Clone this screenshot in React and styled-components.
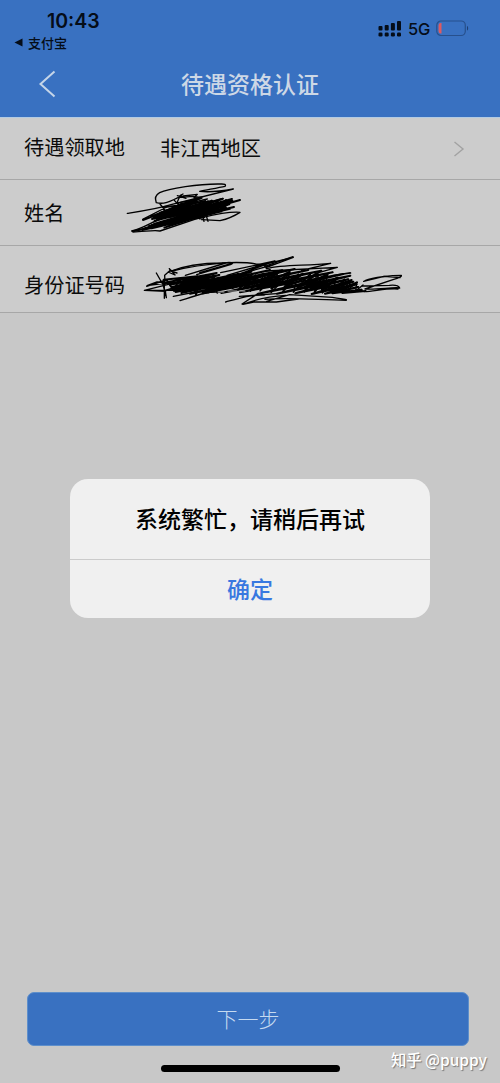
import styled, { createGlobalStyle } from "styled-components"

const GlobalStyle = createGlobalStyle`
    * {
        box-sizing: border-box;
    }
    body {
        margin: 0;
        background-color: #c8c8c8;
        font-family: "Noto Sans CJK SC", sans-serif;
    }
`

const Page = styled.div`
    width: 500px;
    height: 1083px;
    position: relative;
    display: flex;
    flex-direction: column;
    overflow: hidden;
    background-color: #c8c8c8;
    color: #0b0b0b;
`

const Header = styled.header`
    height: 118px;
    flex-shrink: 0;
    background-color: #3971c1;
    border-bottom: 1px solid #b3cbe3;
`
const StatusBar = styled.div`
    height: 52px;
    display: flex;
    justify-content: space-between;
`
const StatusLeft = styled.div`
    display: flex;
    flex-direction: column;
    padding: 9px 0 0 14px;
`
const Time = styled.div`
    margin-left: 33px;
    font: 600 19.5px/24px Inter, sans-serif;
    color: #050d18;
`
const BackToApp = styled.div`
    display: flex;
    align-items: center;
    gap: 5px;
    font-size: 13px;
    line-height: 19px;
    font-weight: 500;
    color: #050d18;
`
const StatusRight = styled.div`
    display: flex;
    height: 20px;
    margin: 18px 31px 0 0;
    align-items: center;
`
const Network = styled.span`
    width: 22px;
    margin: 2px 6px 0;
    font: 500 16.5px/20px Inter, sans-serif;
    letter-spacing: -0.3px;
    color: #050d18;
`

const NavBar = styled.div`
    height: 62px;
    display: grid;
    grid-template-columns: 70px 1fr 70px;
    align-items: center;
`
const BackButton = styled.div`
    display: flex;
    padding: 1px 0 0 38px;
`
const Title = styled.h1`
    margin: 0;
    text-align: center;
    font-size: 23px;
    line-height: 34px;
    font-weight: 500;
    color: #cdd8e6;
`

const Form = styled.div`
    background-color: #cccccc;
`
const Row = styled.div`
    height: ${props => props.$height}px;
    display: flex;
    align-items: center;
    padding-left: 24px;
    border-bottom: 1px solid #a7a7a7;
    font-size: 20.2px;
    line-height: 30px;
`
const Label = styled.div`
    width: 101px;
    flex-shrink: 0;
    white-space: nowrap;
    padding-top: ${props => props.$top || 0}px;
    padding-bottom: ${props => props.$bottom || 0}px;
`
const Value = styled.div`
    flex: 1;
    padding: 0 0 1px 35px;
`
const Arrow = styled.div`
    display: flex;
    margin-right: 34px;
`
const Scribble = styled.svg`
    display: block;
    flex-shrink: 0;
    fill: none;
    stroke: #000;
    stroke-linecap: round;
    stroke-linejoin: round;
`

const Bottom = styled.div`
    margin-top: auto;
    padding: 0 31px 11px 27px;
    display: flex;
    flex-direction: column;
`
const NextButton = styled.div`
    height: 54px;
    display: flex;
    align-items: center;
    justify-content: center;
    padding-bottom: 2px;
    border-radius: 7px;
    border: 1px solid #5e8fcb;
    background-color: #3971c1;
    color: #c6daf0;
    font-size: 21px;
    font-weight: 300;
`
const HomeIndicator = styled.div`
    width: 179px;
    height: 7px;
    margin: 19px 0 0 134px;
    border-radius: 4px;
    background-color: #000;
`

const Alert = styled.div`
    position: absolute;
    left: 70px;
    top: 479px;
    width: 360px;
    height: 139px;
    border-radius: 18px;
    background-color: #f0f0f0;
    text-align: center;
`
const Message = styled.div`
    height: 81px;
    border-bottom: 1px solid #cbcbcb;
    font-size: 23px;
    line-height: 78px;
    font-weight: 500;
    color: #000;
`
const Confirm = styled.div`
    font-size: 23px;
    line-height: 57px;
    font-weight: 500;
    color: #3878e0;
`

const Watermark = styled.div`
    position: absolute;
    right: 13px;
    bottom: 12px;
    font-size: 15.4px;
    line-height: 24px;
    font-weight: 500;
    color: #fff;
    white-space: nowrap;
    text-shadow: 1px 1px 1px #777;
`

const Signal = () => (
    <svg width="24" height="17" viewBox="0 0 24 17" fill="#050d18">
        <rect x="0.5" y="6" width="4" height="4.5" rx="1" />
        <rect x="6.7" y="5" width="4" height="5.5" rx="1" />
        <rect x="12.9" y="3" width="4" height="7.5" rx="1" />
        <rect x="19" y="1" width="4" height="9.5" rx="1" />
        <rect x="0.5" y="12.5" width="4" height="4" rx="1.3" />
        <rect x="6.7" y="12.5" width="4" height="4" rx="1.3" />
        <rect x="12.9" y="12.5" width="4" height="4" rx="1.3" />
        <rect x="19" y="12.5" width="4" height="4" rx="1.3" />
    </svg>
)

const Battery = () => (
    <svg width="33" height="17" viewBox="0 0 33 17">
        <rect x="0.8" y="1" width="28.5" height="14.5" rx="4.2" fill="none" stroke="#27508d" strokeWidth="1.2" />
        <path d="M31 6v4.5c1.5-.6 1.5-3.9 0-4.5z" fill="#1d3f73" />
        <path d="M5.5 3v10.5H4.8a2.2 2.2 0 0 1-2.200-2.200V5.200A2.200 2.200 0 0 1 4.800 3z" fill="#df5a60" />
    </svg>
)

const NameScribble = () => (
    <Scribble width="130" height="65" viewBox="125 180 130 65" overflow="visible">
        <g transform="translate(120 175) scale(.33333)" strokeWidth="4">
            <path d="M22 115C62 109 111 102 153 89L340 42C307 48 276 53 239 49C264 44 296 38 315 34Q321 26 301 27C238 26 145 40 119 53C100 64 107 78 109 83C137 91 158 74 174 68L218 64L248 68L204 80" />
            <path d="M172 62L198 70L181 61L189 57M180 62L172 81L183 98L163 76M190 63L232 58L222 68L244 70M182 82L240 72M176 92L262 72" />
            <path d="M68 133L140 96M95 123L183 88M120 87L137 108M245 134L300 137C321 132 343 123 360 112C321 108 272 122 224 133L120 168C98 164 72 171 39 171L35 168C72 159 97 140 122 132" />
            <path d="M250 130l2 9M260 126l4 13M223 116l17 16" />
        </g>
        <g transform="translate(120 175) scale(.33333)" strokeWidth="6">
            <path d="M69 135L204 83L101 129L264 79L96 132L305 72L111 132L336 72L104 137L337 77L102 147L328 88L95 150L360 75L86 154L342 96L74 160L330 101L57 165L306 109L42 168L282 115L67 165L262 120L95 160L248 122L133 158L223 130" />
            <path d="M131 96L190 91L121 113L223 84L130 116L276 77L142 120L309 71L149 126L333 79L155 133L320 90L165 139L318 98L184 137L287 111L196 133L252 127" />
            <path d="M128 111L160 99L147 125L181 96L171 125L206 94L192 127L228 90L207 132L253 86L230 128L273 84L255 121L295 76L276 112L318 75L297 108L330 82M180 88L230 76L200 90L256 78" />
        </g>
    </Scribble>
)

const IdScribble = () => (
    <Scribble width="290" height="66" viewBox="125 246 290 66" overflow="visible">
        <g transform="translate(135 245) scale(.33333)" strokeWidth="4">
            <path d="M64 84L84 119L94 158L91 139L28 136L136 109L36 122L66 111L103 112M90 119L89 91L106 76L103 71L111 79L120 90L99 81C145 63 207 54 261 54Q325 50 363 57L391 61M110 79L126 84M28 136H134M35 124L93 105M88 107V160" />
            <path d="M111 78C153 67 198 59 282 52Q301 52 286 59L185 89M151 91L272 54M194 83L290 55M257 83L420 48L306 90L422 57M276 91L380 60L475 37L393 68" />
            <path d="M135 167C179 153 219 137 260 142M115 154L196 138M272 171C314 159 344 149 388 150M321 177L370 145M324 178C379 157 416 153 452 151M324 178L356 171L424 171L490 162M313 154L425 146M395 169L464 149L592 157Q620 161 634 164M390 163C462 157 537 164 634 166" />
            <path d="M389 64L474 35M394 71C444 58 508 63 587 55L500 76M394 78L607 67L540 86M647 84L592 92L646 83M690 107C716 97 770 91 799 91Q802 96 774 104L690 132C725 135 779 125 794 129Q789 118 763 121L682 123M686 109L747 94L795 98M688 140C721 138 759 129 789 132" />
        </g>
        <g transform="translate(135 245) scale(.33333)" strokeWidth="6">
            <path d="M86 104L188 94L97 112L245 84L105 119L253 90L112 126L310 87L111 132L349 80L118 136L405 75L122 141L442 76L139 144L479 72L165 146L520 75L203 145L559 77L259 144L593 82L315 142L625 87L370 146L646 92L426 146L640 103L481 145L655 110L530 147L665 118L570 146L670 126L592 145L680 134L622 144L692 138" />
            <path d="M96 107L117 138L132 101L151 142L164 98L183 148L199 97L220 142L235 89L247 143M91 137L179 109L131 135L223 105L165 137L272 102L216 130L310 96L244 129L350 91L292 129L386 86L327 127L430 82L367 129L464 80L409 130L504 86L448 127L548 85L488 128L574 90L527 130L609 98L561 134L650 105L602 137L666 112" />
        </g>
        <g transform="translate(135 245) scale(.33333)" strokeWidth="4">
            <path d="M331 93L312 133L361 90L346 139L393 85L375 138L430 79L408 143L465 83L442 143L490 87L475 142L528 83L508 141L551 88L537 146L580 84L562 144L604 98L592 143L628 102L619 139L647 107L638 135L665 112L662 138L684 120" />
        </g>
        <path d="M218 292h6m4-1h9m3 0h5" stroke="#a9a9a9" strokeWidth="1" />
    </Scribble>
)

const App = () => {
    return (
        <Page>
            <GlobalStyle />
            <Header>
                <StatusBar>
                    <StatusLeft>
                        <Time>10:43</Time>
                        <BackToApp>
                            <svg width="9" height="9" viewBox="0 0 9 9">
                                <path d="M0.5 4.5L8.5 0.5v8z" fill="#050d18" />
                            </svg>
                            支付宝
                        </BackToApp>
                    </StatusLeft>
                    <StatusRight>
                        <Signal />
                        <Network>5G</Network>
                        <Battery />
                    </StatusRight>
                </StatusBar>
                <NavBar>
                    <BackButton>
                        <svg width="20" height="28" viewBox="0 0 20 28">
                            <path d="M16.5 1.5L2.5 14L16.5 26.5" fill="none" stroke="#c5d5e8" strokeWidth="2" />
                        </svg>
                    </BackButton>
                    <Title>待遇资格认证</Title>
                </NavBar>
            </Header>
            <Form>
                <Row $height={62}>
                    <Label $bottom={3}>待遇领取地</Label>
                    <Value>非江西地区</Value>
                    <Arrow>
                        <svg width="14" height="18" viewBox="0 0 14 18">
                            <path d="M2.5 2L11 9L2.5 16" fill="none" stroke="#a2a2a2" strokeWidth="1.4" />
                        </svg>
                    </Arrow>
                </Row>
                <Row $height={66}>
                    <Label>姓名</Label>
                    <NameScribble />
                </Row>
                <Row $height={67}>
                    <Label $top={11}>身份证号码</Label>
                    <IdScribble />
                </Row>
            </Form>
            <Bottom>
                <NextButton>下一步</NextButton>
                <HomeIndicator />
            </Bottom>
            <Alert>
                <Message>系统繁忙，请稍后再试</Message>
                <Confirm>确定</Confirm>
            </Alert>
            <Watermark>知乎 @puppy</Watermark>
        </Page>
    )
}

export default App
